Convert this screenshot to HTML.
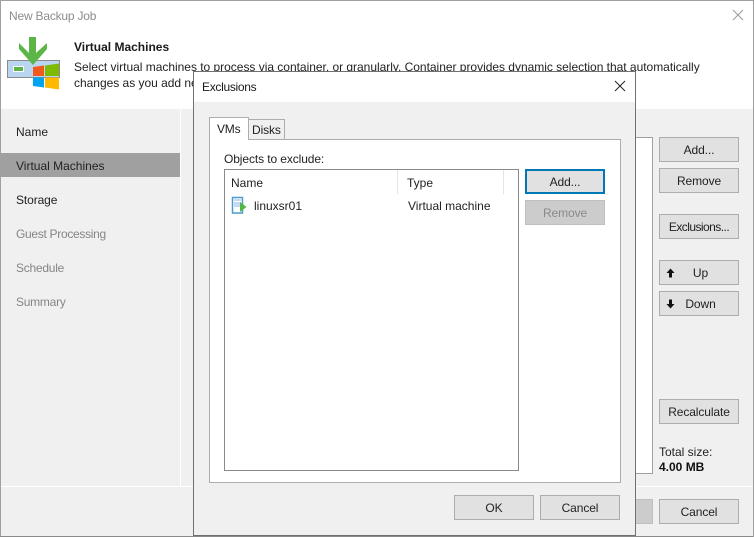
<!DOCTYPE html>
<html><head><meta charset="utf-8">
<style>
html,body{margin:0;padding:0;width:754px;height:537px;overflow:hidden;background:#fff}
*{box-sizing:border-box}
body{font-family:"Liberation Sans",sans-serif;font-size:12px;color:#222;position:relative}
.a{position:absolute}
.t{position:absolute;white-space:nowrap;line-height:16px;height:16px}
.b{position:absolute;width:80px;height:25px;background:#e1e1e1;border:1px solid #adadad;text-align:center;line-height:25px;white-space:nowrap;color:#222;letter-spacing:-.1px}
</style></head>
<body>
<!-- main window -->
<div class="a" style="left:0;top:0;width:754px;height:537px;background:#fff;border:1px solid #a0a0a0"></div>
<div class="a" style="left:1px;top:109px;width:752px;height:427px;background:#f0f0f0"></div>
<div class="a" style="left:180px;top:109px;width:1px;height:377px;background:#fff"></div>
<div class="a" style="left:1px;top:486px;width:752px;height:1px;background:#fff"></div>
<div class="a" style="left:0;top:536px;width:754px;height:1px;background:#8a8a8a"></div>
<div class="a" style="left:753px;top:0;width:1px;height:537px;background:#a0a0a0"></div>
<div class="t" style="left:9px;top:8px;color:#8c8c8c;letter-spacing:-.2px">New Backup Job</div>
<svg class="a" style="left:732px;top:9px" width="12" height="12"><path d="M1 1L11 11M11 1L1 11" stroke="#9a9a9a" stroke-width="1" fill="none"/></svg>

<!-- logo -->
<svg class="a" style="left:0;top:30px" width="70" height="65" viewBox="0 0 70 65">
<rect x="7.500" y="30.500" width="52" height="17" fill="#b9d5ef" stroke="#8a8a8a" stroke-width="1"/>
<rect x="13.500" y="36.500" width="10" height="5" fill="#5cb547" stroke="#fff" stroke-width="1"/>
<path d="M29 7H36V23L47 13V19L33 35L19 19V13L29 23Z" fill="#5cb547"/>
<path d="M33 37L44 35.500V46H33Z" fill="#f25a1d"/>
<path d="M45 35.500L59 33.500V46H45Z" fill="#7fba00"/>
<path d="M33 47.500H44V57.500L33 56Z" fill="#00a4ef"/>
<path d="M45 47.500H59V59.500L45 57.500Z" fill="#ffb900"/>
</svg>

<div class="t" style="left:74px;top:39px;font-weight:bold;color:#1a1a1a">Virtual Machines</div>
<div class="t" style="left:74px;top:59px;letter-spacing:-.02px">Select virtual machines to process via container, or granularly. Container provides dynamic selection that automatically</div>
<div class="t" style="left:74px;top:75px;letter-spacing:-.02px">changes as you add new</div>

<!-- nav -->
<div class="a" style="left:1px;top:153px;width:179px;height:24px;background:#a0a0a0"></div>
<div class="t" style="left:16px;top:124px">Name</div>
<div class="t" style="left:16px;top:158px">Virtual Machines</div>
<div class="t" style="left:16px;top:192px;letter-spacing:-.1px">Storage</div>
<div class="t" style="left:16px;top:226px;color:#858585;letter-spacing:-.3px">Guest Processing</div>
<div class="t" style="left:16px;top:260px;color:#858585;letter-spacing:-.25px">Schedule</div>
<div class="t" style="left:16px;top:294px;color:#858585;letter-spacing:-.25px">Summary</div>

<!-- behind list -->
<div class="a" style="left:620px;top:137px;width:33px;height:337px;background:#fff;border:1px solid #a0a0a0"></div>

<!-- right buttons -->
<div class="b" style="left:659px;top:137px">Add...</div>
<div class="b" style="left:659px;top:168px">Remove</div>
<div class="b" style="left:659px;top:214px;letter-spacing:-.55px">Exclusions...</div>
<div class="b" style="left:659px;top:260px"><span style="margin-left:3px">Up</span></div>
<div class="b" style="left:659px;top:291px"><span style="margin-left:3px">Down</span></div>
<svg class="a" style="left:666px;top:268px" width="10" height="10"><path d="M3 9.500V5H.5L4.500 .5L8.500 5H6V9.500Z" fill="#111"/></svg>
<svg class="a" style="left:666px;top:299px" width="10" height="10"><path d="M3 .5V5H.5L4.500 9.500L8.500 5H6V.5Z" fill="#111"/></svg>
<div class="b" style="left:659px;top:399px">Recalculate</div>
<div class="t" style="left:659px;top:444px">Total size:</div>
<div class="t" style="left:659px;top:459px;font-weight:bold;color:#111">4.00 MB</div>
<div class="b" style="left:620px;top:499px;width:33px;background:#ccc;border-color:#bfbfbf"></div>
<div class="b" style="left:659px;top:499px">Cancel</div>

<!-- dialog -->
<div class="a" style="left:193px;top:71px;width:443px;height:465px;background:#f0f0f0;border:1px solid #707070"></div>
<div class="a" style="left:194px;top:72px;width:441px;height:30px;background:#fff"></div>
<div class="t" style="left:202px;top:79px;color:#1a1a1a;letter-spacing:-.3px">Exclusions</div>
<svg class="a" style="left:614px;top:80px" width="12" height="12"><path d="M1 1L11 11M11 1L1 11" stroke="#222" stroke-width="1" fill="none"/></svg>

<!-- tabs -->
<div class="a" style="left:209px;top:139px;width:412px;height:344px;background:#fff;border:1px solid #adadad"></div>
<div class="a" style="left:248px;top:119px;width:37px;height:21px;background:#f0f0f0;border:1px solid #adadad"></div>
<div class="a" style="left:209px;top:117px;width:40px;height:23px;background:#fff;border:1px solid #adadad;border-bottom:none"></div>
<div class="t" style="left:217px;top:121px;letter-spacing:-.2px">VMs</div>
<div class="t" style="left:252px;top:122px;letter-spacing:-.1px">Disks</div>
<div class="t" style="left:224px;top:151px;letter-spacing:-.1px">Objects to exclude:</div>

<!-- listbox -->
<div class="a" style="left:224px;top:169px;width:295px;height:302px;background:#fff;border:1px solid #8a8a8a"></div>
<div class="a" style="left:397px;top:170px;width:1px;height:24px;background:#e5e5e5"></div>
<div class="a" style="left:503px;top:170px;width:1px;height:24px;background:#e5e5e5"></div>
<div class="t" style="left:231px;top:175px">Name</div>
<div class="t" style="left:407px;top:175px">Type</div>
<svg class="a" style="left:231px;top:196px" width="17" height="19" viewBox="0 0 17 19">
<rect x="1.500" y="1.500" width="10" height="15.500" fill="#fff" stroke="#4a9bd0" stroke-width="1.500"/>
<rect x="3" y="3" width="7" height="2" fill="#c6d9ee"/>
<rect x="3" y="6" width="7" height="5" fill="#c6d9ee"/>
<path d="M9 6L15.500 11L9 16Z" fill="#4fb848"/>
</svg>
<div class="t" style="left:254px;top:198px">linuxsr01</div>
<div class="t" style="left:408px;top:198px">Virtual machine</div>

<!-- dialog buttons -->
<div class="b" style="left:525px;top:169px;border:2px solid #0078b4;line-height:23px">Add...</div>
<div class="b" style="left:525px;top:200px;background:#ccc;border-color:#bfbfbf;color:#8a8a8a">Remove</div>
<div class="b" style="left:454px;top:495px">OK</div>
<div class="b" style="left:540px;top:495px">Cancel</div>
</body></html>
